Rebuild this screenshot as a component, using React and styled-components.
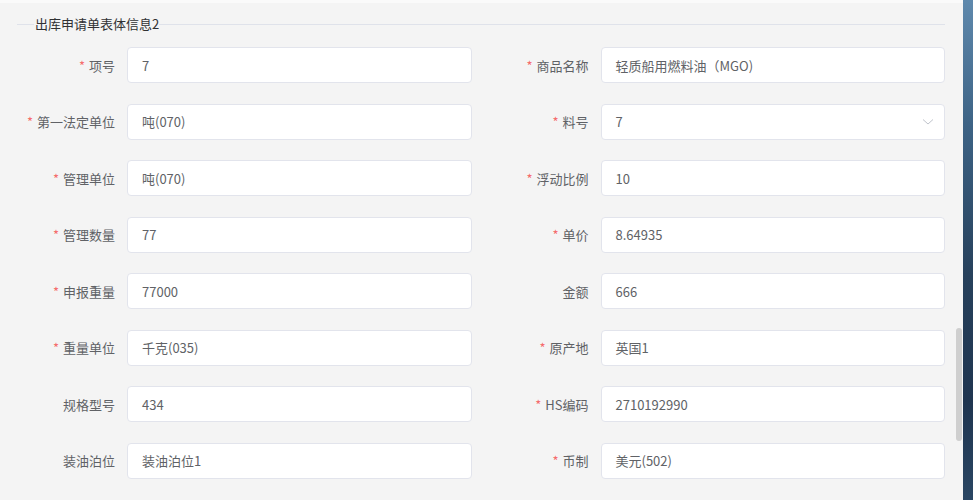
import React from "react";
import styled, { createGlobalStyle } from "styled-components";

const Global = createGlobalStyle`
  html, body {
    margin: 0;
    padding: 0;
    width: 973px;
    height: 500px;
    overflow: hidden;
  }
  body {
    font-family: "Noto Sans CJK SC", "Noto Sans", sans-serif;
  }
`;

const Page = styled.div`
  display: flex;
  width: 973px;
  height: 500px;
`;

const Panel = styled.div`
  position: relative;
  width: 963px;
  height: 500px;
  background: #f4f4f4;
  border-top: 3px solid #fafafa;
  box-sizing: border-box;
  overflow: hidden;
`;

const Sea = styled.div`
  flex: 1;
  background: linear-gradient(180deg, #5f89ad 0%, #3d6385 25%, #27415c 55%, #1f3550 80%, #2a4663 100%);
`;

const Section = styled.div`
  margin: 13px 18px 0 17px;
`;

const Legend = styled.div`
  display: flex;
  align-items: center;
  height: 16px;
  line-height: 16px;
  font-size: 13px;
  color: #303133;
  &::before {
    content: "";
    width: 17px;
    height: 1px;
    background: #dfe2ea;
    margin-right: 1px;
  }
  &::after {
    content: "";
    flex: 1;
    height: 1px;
    background: #dfe2ea;
  }
`;

const Grid = styled.div`
  display: grid;
  grid-template-columns: 1fr 1fr;
  column-gap: 19px;
  row-gap: 20.57px;
  margin-top: 15px;
`;

const Item = styled.div`
  display: flex;
  align-items: center;
  height: 36px;
`;

const Label = styled.label`
  width: 110px;
  flex-shrink: 0;
  padding-right: 12px;
  box-sizing: border-box;
  text-align: right;
  font-size: 13px;
  color: #606266;
  white-space: nowrap;
  &::before {
    content: ${(p) => (p.$required ? '"*"' : '""')};
    color: #f56c6c;
    margin-right: 4px;
  }
`;

const Box = styled.div`
  position: relative;
  flex: 1;
  height: 36px;
  box-sizing: border-box;
  background: #fff;
  border: 1px solid #e2e4ec;
  border-radius: 4px;
  display: flex;
  align-items: center;
  padding: 0 14px;
  font-size: 13px;
  color: #606266;
`;

const Arrow = styled.svg`
  position: absolute;
  right: 10px;
  top: 50%;
  margin-top: -4px;
`;

const Scrollbar = styled.div`
  position: absolute;
  left: 956px;
  top: 325px;
  width: 6px;
  height: 113px;
  border-radius: 3px;
  background: #cfcfcf;
`;

const fields = [
  ["项号", true, "7"],
  ["商品名称", true, "轻质船用燃料油（MGO)"],
  ["第一法定单位", true, "吨(070)"],
  ["料号", true, "7", true],
  ["管理单位", true, "吨(070)"],
  ["浮动比例", true, "10"],
  ["管理数量", true, "77"],
  ["单价", true, "8.64935"],
  ["申报重量", true, "77000"],
  ["金额", false, "666"],
  ["重量单位", true, "千克(035)"],
  ["原产地", true, "英国1"],
  ["规格型号", false, "434"],
  ["HS编码", true, "2710192990"],
  ["装油泊位", false, "装油泊位1"],
  ["币制", true, "美元(502)"],
];

export default function App() {
  return (
    <Page>
      <Global />
      <Panel>
        <Section>
          <Legend>出库申请单表体信息2</Legend>
          <Grid>
            {fields.map(([label, req, value, select]) => (
              <Item key={label}>
                <Label $required={req}>{label}</Label>
                <Box>
                  {value}
                  {select && (
                    <Arrow width="12" height="8" viewBox="0 0 12 8">
                      <path d="M1 1.5 L6 6 L11 1.5" fill="none" stroke="#c0c4cc" strokeWidth="1" />
                    </Arrow>
                  )}
                </Box>
              </Item>
            ))}
          </Grid>
        </Section>
        <Scrollbar />
      </Panel>
      <Sea />
    </Page>
  );
}
